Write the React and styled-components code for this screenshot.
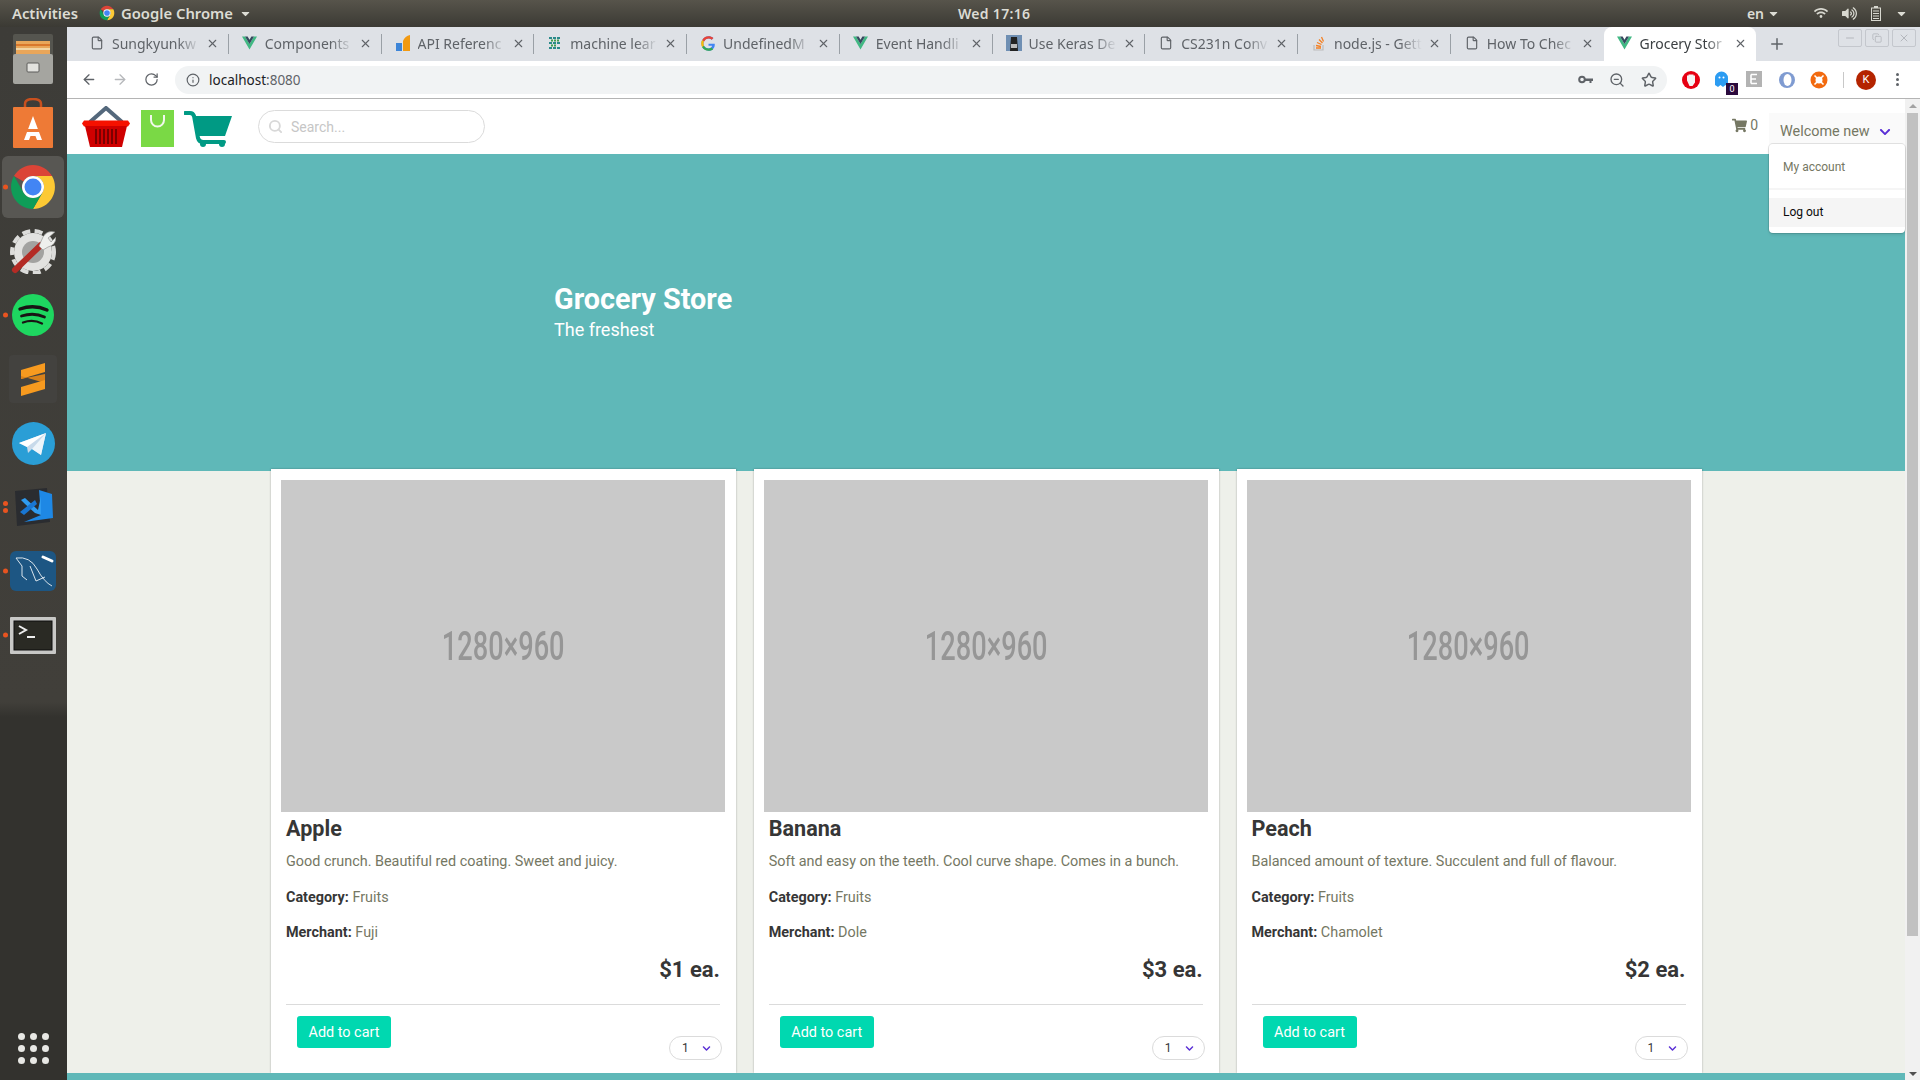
import styled, { createGlobalStyle } from "styled-components";
import { ArrowLeft, ArrowRight, RotateCw, Info, Search, Star, ZoomOut, X, Plus, Minus, File, Copy } from "lucide-react";
import { FaShoppingCart, FaChevronDown, FaCaretDown, FaWifi, FaVolumeUp } from "react-icons/fa";

const GlobalStyle = createGlobalStyle`
  html, body {
    margin: 0;
    padding: 0;
    overflow: hidden;
    background: #3c3b37;
  }
`;

const Screen = styled.div`
  width: 1920px;
  height: 1080px;
  display: flex;
  flex-direction: column;
  overflow: hidden;
  font-family: Roboto, "Liberation Sans", sans-serif;
`;

// Ubuntu top bar
const TopBar = styled.div`
  height: 27px;
  flex: none;
  box-sizing: border-box;
  padding-bottom: 1px;
  display: grid;
  grid-template-columns: 958px auto 1fr;
  align-items: center;
  background: linear-gradient(#57544b, #3b3a34);
  color: #dcdcd4;
  font-family: "Noto Sans", "Open Sans", sans-serif;
  font-size: 14.8px;
  font-weight: 600;
`;

const TopLeft = styled.div`
  display: flex;
  align-items: center;
  padding-left: 12px;
`;

const AppMenu = styled.div`
  display: flex;
  align-items: center;
  gap: 6px;
  margin-left: 21px;
`;

const TopClock = styled.div`
  font-size: 14px;
  letter-spacing: 0.3px;
`;

const TopRight = styled.div`
  display: flex;
  align-items: center;
  justify-content: flex-end;
  padding-right: 12px;
  gap: 14px;
`;

const Lang = styled.div`
  display: flex;
  align-items: center;
  gap: 3px;
  margin-right: 20px;
  font-size: 14px;
`;

const Body = styled.div`
  flex: 1;
  display: flex;
  min-height: 0;
`;

const Dock = styled.div`
  width: 67px;
  flex: none;
  display: flex;
  flex-direction: column;
  background: linear-gradient(#3d3c38 0, #413f3a 675px, #33322e 690px, #33322e 100%);
`;

const DockSlot = styled.div`
  position: relative;
  height: 64px;
  flex: none;
  box-sizing: border-box;
  padding-right: 1px;
  display: flex;
  align-items: center;
  justify-content: center;
`;

const ActiveTile = styled.div`
  width: 62px;
  height: 62px;
  border-radius: 6px;
  background: #585753;
  display: flex;
  align-items: center;
  justify-content: center;
`;

const DockDots = styled.div`
  position: absolute;
  left: 3px;
  top: 50%;
  transform: translateY(-50%);
  display: flex;
  flex-direction: column;
  gap: 2px;
`;

const DockDot = styled.div`
  width: 5px;
  height: 5px;
  border-radius: 50%;
  background: #e95420;
`;

const AppGrid = styled.div`
  margin-top: auto;
  margin-bottom: 16px;
  align-self: center;
  display: grid;
  grid-template-columns: repeat(3, 7px);
  gap: 5px;
`;

const GridDot = styled.div`
  width: 7px;
  height: 7px;
  border-radius: 50%;
  background: #e8e8e4;
`;

const Browser = styled.div`
  flex: 1;
  min-width: 0;
  display: flex;
  flex-direction: column;
`;

const TabStrip = styled.div`
  height: 34px;
  flex: none;
  display: flex;
  align-items: stretch;
  padding-left: 9px;
  background: #dee1e6;
`;

const Tab = styled.div`
  position: relative;
  width: 152.75px;
  flex: none;
  box-sizing: border-box;
  display: flex;
  align-items: center;
  padding: 0 0 2px 13px;
  background: ${({ $active }) => ($active ? "#fff" : "transparent")};
  border-radius: ${({ $active }) => ($active ? "8px 8px 0 0" : "0")};
  color: ${({ $active }) => ($active ? "#3c4043" : "#5f6368")};
  font-family: "Noto Sans", "Open Sans", sans-serif;
  font-size: 14px;
  &::after {
    content: "";
    position: absolute;
    right: 0;
    top: 7px;
    bottom: 7px;
    width: 1px;
    background: ${({ $divider }) => ($divider ? "#9aa0a6" : "transparent")};
  }
`;

const TabIcon = styled.div`
  width: 16px;
  height: 16px;
  flex: none;
  display: flex;
  align-items: center;
  justify-content: center;
`;

const TabTitle = styled.div`
  width: 88px;
  margin-left: 7px;
  overflow: hidden;
  white-space: nowrap;
  -webkit-mask-image: linear-gradient(90deg, #000 75%, transparent);
  mask-image: linear-gradient(90deg, #000 75%, transparent);
`;

const TabClose = styled.div`
  margin-left: 6px;
  display: flex;
  color: #5f6368;
`;

const NewTab = styled.div`
  display: flex;
  align-items: center;
  margin-left: 12px;
  color: #5f6368;
`;

const WindowButtons = styled.div`
  margin-left: auto;
  margin-right: 4px;
  margin-top: 2px;
  display: flex;
  align-items: flex-start;
  gap: 3px;
`;

const WindowButton = styled.div`
  width: 22px;
  height: 16px;
  border: 1px solid #c4c7cd;
  border-radius: 2px;
  display: flex;
  align-items: center;
  justify-content: center;
  color: #b4b7bd;
`;

const Toolbar = styled.div`
  height: 37px;
  flex: none;
  display: flex;
  align-items: center;
  padding-left: 14px;
  background: #fff;
  border-bottom: 1px solid #b4b4b4;
`;

const NavButton = styled.div`
  width: 16px;
  display: flex;
  justify-content: center;
  margin-right: 15px;
  color: ${({ $dim }) => ($dim ? "#b6b8bb" : "#5f6368")};
`;

const AddressBar = styled.div`
  width: 1492px;
  height: 28px;
  margin-left: 1px;
  display: flex;
  align-items: center;
  padding: 0 10px 0 11px;
  box-sizing: border-box;
  border-radius: 14px;
  background: #f1f3f4;
  color: #202124;
  font-family: "Noto Sans", "Open Sans", sans-serif;
  font-size: 13.5px;
`;

const Url = styled.div`
  margin-left: 2px;
  span {
    color: #5f6368;
  }
`;

const InfoSlot = styled.div`
  width: 14px;
  margin-right: 7px;
  display: flex;
`;

const AddressActions = styled.div`
  margin-left: auto;
  display: flex;
  align-items: center;
  gap: 16px;
  color: #5f6368;
`;

const Extensions = styled.div`
  display: flex;
  align-items: center;
  margin-left: 15px;
  gap: 14px;
`;

const Extension = styled.div`
  position: relative;
  width: 18px;
  height: 18px;
  display: flex;
`;

const GhostCount = styled.div`
  position: absolute;
  right: -6px;
  bottom: -6px;
  width: 12px;
  height: 12px;
  background: #2b0a3d;
  color: #fff;
  font-size: 9px;
  line-height: 12px;
  text-align: center;
`;

const ToolbarDivider = styled.div`
  width: 1px;
  height: 16px;
  margin-left: 15px;
  background: #c8c8c8;
`;

const Avatar = styled.div`
  width: 20px;
  height: 20px;
  margin-left: 12px;
  border-radius: 50%;
  background: #b42400;
  color: #fff;
  font-size: 11px;
  line-height: 20px;
  text-align: center;
`;

const KebabMenu = styled.div`
  display: flex;
  flex-direction: column;
  gap: 2px;
  margin-left: 20px;
`;

const KebabDot = styled.div`
  width: 3px;
  height: 3px;
  border-radius: 50%;
  background: #5f6368;
`;

const PageArea = styled.div`
  flex: 1;
  min-height: 0;
  display: flex;
`;

const Page = styled.div`
  position: relative;
  flex: 1;
  min-width: 0;
  display: flex;
  flex-direction: column;
  background: #eef0ea;
  color: #757763;
`;

// Site navbar
const Navbar = styled.div`
  height: 55px;
  flex: none;
  display: flex;
  align-items: center;
  padding-left: 14px;
  background: #fff;
`;

const LogoRow = styled.div`
  display: flex;
  align-items: flex-end;
  gap: 10px;
`;

const SearchBox = styled.div`
  width: 227px;
  height: 33px;
  margin-left: 26px;
  box-sizing: border-box;
  display: flex;
  align-items: center;
  gap: 8px;
  padding-left: 9px;
  border: 1px solid #dbdbdb;
  border-radius: 17px;
  color: #c6c6c6;
  font-size: 14px;
`;

const NavRight = styled.div`
  margin-left: auto;
  display: flex;
  align-items: flex-start;
  align-self: flex-start;
`;

const CartCount = styled.div`
  display: flex;
  align-items: center;
  gap: 3px;
  height: 52px;
  margin-right: 11px;
  color: #757763;
  font-size: 14px;
`;

const WelcomeButton = styled.div`
  width: 136px;
  height: 31px;
  margin-top: 14px;
  box-sizing: border-box;
  display: flex;
  align-items: center;
  gap: 9px;
  padding: 6px 0 0 11px;
  background: #fafafa;
  color: #757763;
  font-size: 14.4px;
`;

const AccountMenu = styled.div`
  position: absolute;
  right: 0;
  top: 45px;
  width: 136px;
  height: 89px;
  box-sizing: border-box;
  padding-top: 8px;
  background: #fff;
  border-radius: 4px;
  box-shadow: 0 2px 3px rgba(10, 10, 10, 0.1), 0 0 0 1px rgba(10, 10, 10, 0.1);
  font-size: 12px;
`;

const MenuItem = styled.div`
  height: ${({ $active }) => ($active ? "29px" : "30px")};
  line-height: ${({ $active }) => ($active ? "29px" : "30px")};
  padding-left: 14px;
  background: ${({ $active }) => ($active ? "#f5f5f5" : "transparent")};
  color: ${({ $active }) => ($active ? "#0a0a0a" : "#757763")};
`;

const MenuDivider = styled.div`
  height: 2px;
  margin: 6px 0 8px;
  background: #f5f5f5;
`;

const Hero = styled.div`
  height: 317px;
  flex: none;
  box-sizing: border-box;
  padding: 127px 0 0 487px;
  background: #5fb8b8;
  color: #fff;
`;

const HeroTitle = styled.div`
  font-size: 28.8px;
  font-weight: 700;
  line-height: 37px;
`;

const HeroSubtitle = styled.div`
  font-size: 18px;
  line-height: 24px;
`;

const CardRow = styled.div`
  flex: 1;
  min-height: 0;
  display: flex;
  gap: 17.75px;
  padding-left: 204px;
  margin-top: -2px;
`;

const Card = styled.div`
  width: 465px;
  height: 604px;
  flex: none;
  box-sizing: border-box;
  padding: 11px 11px 0 10px;
  background: #fff;
  box-shadow: 0 0 2px rgba(10, 10, 10, 0.3);
`;

const Placeholder = styled.div`
  height: 332px;
  display: flex;
  align-items: center;
  justify-content: center;
  background: #c9c9c9;
  color: #969696;
`;

const PlaceholderText = styled.div`
  font-size: 40px;
  font-weight: 500;
  transform: scaleX(0.68);
`;

const CardBody = styled.div`
  padding: 0 5px;
`;

const ProductName = styled.div`
  height: 33px;
  line-height: 33px;
  color: #363636;
  font-size: 21.6px;
  font-weight: 700;
`;

const Description = styled.div`
  margin-top: 6px;
  font-size: 14.4px;
  line-height: 22px;
`;

const Meta = styled.div`
  margin-top: ${({ $gap }) => $gap}px;
  font-size: 14.4px;
  line-height: 22px;
  b {
    color: #363636;
    font-weight: 700;
  }
`;

const Price = styled.div`
  margin-top: 12px;
  color: #363636;
  font-size: 22px;
  font-weight: 700;
  line-height: 28px;
  text-align: right;
`;

const Rule = styled.div`
  height: 1px;
  margin-top: 20px;
  background: #dbdbdb;
`;

const Actions = styled.div`
  display: flex;
  justify-content: space-between;
  align-items: flex-start;
  margin-top: 11px;
`;

const AddButton = styled.div`
  width: 94px;
  height: 32px;
  margin-left: 11px;
  border-radius: 3px;
  background: #00d8b0;
  color: #fff;
  font-size: 14.4px;
  line-height: 33px;
  text-align: center;
`;

const QtySelect = styled.div`
  width: 53px;
  height: 24px;
  margin-top: 20px;
  margin-right: -2px;
  box-sizing: border-box;
  display: flex;
  align-items: center;
  justify-content: space-between;
  padding: 0 10px 0 12px;
  border: 1px solid #dbdbdb;
  border-radius: 12px;
  color: #363636;
  font-size: 12px;
`;

const ChevronIcon = styled(FaChevronDown)`
  color: #5a2fd6;
  width: ${({ $size }) => $size}px;
  height: ${({ $size }) => $size}px;
`;

const PageFooter = styled.div`
  height: 7px;
  flex: none;
  background: #5fb8b8;
`;

const Scrollbar = styled.div`
  width: 15px;
  flex: none;
  display: flex;
  flex-direction: column;
  align-items: center;
  background: #f1f1f1;
`;

const ScrollArrow = styled.div`
  height: ${({ $down }) => ($down ? "auto" : "14px")};
  margin-top: ${({ $down }) => ($down ? "auto" : "0")};
  margin-bottom: ${({ $down }) => ($down ? "4px" : "0")};
  padding-top: ${({ $down }) => ($down ? "0" : "5px")};
  box-sizing: border-box;
  &::before {
    content: "";
    display: block;
    border-left: 4px solid transparent;
    border-right: 4px solid transparent;
    border-bottom: ${({ $down }) => ($down ? "0" : "4px solid #a3a3a3")};
    border-top: ${({ $down }) => ($down ? "4px solid #505050" : "0")};
  }
`;

const ScrollThumb = styled.div`
  width: 11px;
  height: 823px;
  flex: none;
  background: #c1c1c1;
`;

// Drawn icons
const ChromeLogo = ({ size }) => (
  <svg width={size} height={size} viewBox="0 0 48 48">
    <path d="M5 13A22 22 0 0 1 43 13H24A11 11 0 0 0 14.5 18.5Z" fill="#db4437" />
    <path d="M43 13A22 22 0 0 1 24 46L33.5 29.5A11 11 0 0 0 24 13Z" fill="#fcc934" />
    <path d="M24 46A22 22 0 0 1 5 13L14.5 29.5A11 11 0 0 0 33.5 29.5Z" fill="#0f9d58" />
    <circle cx="24" cy="24" r="11" fill="#fff" />
    <circle cx="24" cy="24" r="8.5" fill="#4285f4" />
  </svg>
);

const VueLogo = () => (
  <svg width="15" height="14" viewBox="0 0 16 14">
    <path d="M0 0H3.2L8 8 12.8 0H16L8 14Z" fill="#41b883" />
    <path d="M3.2 0H6L8 3.4 10 0H12.8L8 8Z" fill="#35495e" />
  </svg>
);

const FilesIcon = () => (
  <svg width="42" height="52" viewBox="0 0 42 52">
    <rect x="1" y="1" width="40" height="24" rx="2" fill="#55554f" />
    <rect x="4" y="8" width="34" height="13" fill="#e9a65a" />
    <rect x="4" y="11" width="34" height="2" fill="#d9772c" />
    <rect x="4" y="15" width="34" height="2" fill="#f2d5a5" />
    <rect x="1" y="21" width="40" height="30" rx="2" fill="#a5a5a0" />
    <rect x="15" y="30" width="12" height="9" rx="1" fill="#e2e2de" stroke="#5d5d5b" />
  </svg>
);

const StoreIcon = () => (
  <svg width="42" height="50" viewBox="0 0 42 50">
    <path d="M13 12V6Q13 1 21 1T29 6V12" fill="none" stroke="#c8501e" strokeWidth="2.5" />
    <rect x="1" y="9" width="40" height="41" rx="1" fill="#ee7a36" />
    <path d="M21 18L30 42H25L23.5 38H18.5L17 42H12Z" fill="#fff" />
    <rect x="12" y="31" width="18" height="3" fill="#ee7a36" />
  </svg>
);

const ToolIcon = () => (
  <svg width="46" height="46" viewBox="0 0 46 46">
    <circle cx="23" cy="24" r="21" fill="none" stroke="#dcdcda" strokeWidth="4" strokeDasharray="8 4.500" />
    <circle cx="23" cy="24" r="19" fill="#e2e2e0" />
    <circle cx="23" cy="24" r="11" fill="#a2a2a0" />
    <path d="M5 42L31 17" stroke="#b42b25" strokeWidth="6" strokeLinecap="round" />
    <path d="M29 18L33 9Q37 2 45 4L38 10 41 14 46 9Q46 17 38 19L33 22Z" fill="#efefed" stroke="#8c8c8a" strokeWidth="0.6" />
  </svg>
);

const SpotifyIcon = () => (
  <svg width="42" height="42" viewBox="0 0 42 42">
    <circle cx="21" cy="21" r="21" fill="#1ed760" />
    <g fill="none" stroke="#191414" strokeLinecap="round">
      <path d="M8 15Q22 10 35 16" strokeWidth="3.4" />
      <path d="M9.5 22Q22 18 32.5 23" strokeWidth="2.8" />
      <path d="M11 28.5Q21 25 30 29.5" strokeWidth="2.3" />
    </g>
  </svg>
);

const SublimeIcon = () => (
  <svg width="48" height="48" viewBox="0 0 48 48">
    <rect width="48" height="48" rx="4" fill="#43423f" />
    <path d="M12 15L36 8V17L12 24Z" fill="#f79a1f" />
    <path d="M12 21L36 28V19L12 24Z" fill="#d8811a" />
    <path d="M12 32L36 25V34L12 41Z" fill="#f79a1f" />
  </svg>
);

const TelegramIcon = () => (
  <svg width="43" height="43" viewBox="0 0 43 43">
    <circle cx="21.5" cy="21.5" r="21.5" fill="#2a9ed6" />
    <path d="M7 21L34 11 29 33 20 27 16 31 15 25Z" fill="#c8daea" />
    <path d="M7 21L34 11 15 25Z" fill="#fff" />
    <path d="M20 27L34 11 29 33Z" fill="#eef5fa" />
  </svg>
);

const VSCodeIcon = () => (
  <svg width="42" height="38" viewBox="0 0 42 38">
    <path d="M3 3L35 0 38 34 5 38Z" fill="#2a2c30" />
    <path d="M27 2L40 6 41 30 12 34 29 27Z" fill="#1e88e5" />
    <path d="M9 12L13 10 26 22 29 8V27L23 25 13 16Z" fill="#2f9bf0" />
    <path d="M8 24L23 12 25 16 12 27Z" fill="#1976d2" />
  </svg>
);

const MysqlIcon = () => (
  <svg width="46" height="40" viewBox="0 0 46 40">
    <rect width="46" height="40" rx="6" fill="#1d5683" />
    <path d="M6 7Q20 5 27 18T42 35M6 7L12 15 12 25 17 29M20 15L26 30 35 26" fill="none" stroke="#d9e4ec" strokeWidth="1" />
    <path d="M33 6L42 10" stroke="#fff" strokeWidth="3" strokeLinecap="round" />
  </svg>
);

const TerminalIcon = () => (
  <svg width="46" height="37" viewBox="0 0 46 37">
    <rect width="46" height="37" rx="1" fill="#c8c8c6" />
    <rect x="4" y="4" width="38" height="29" fill="#2a2a24" stroke="#0c0c0c" />
    <path d="M9 9L16 13 9 17" fill="none" stroke="#eee" strokeWidth="2" />
    <rect x="17" y="19" width="8" height="2" fill="#eee" />
  </svg>
);

const BatteryIcon = () => (
  <svg width="10" height="15" viewBox="0 0 10 15">
    <rect x="3" y="0" width="4" height="2" fill="#d8d8d0" />
    <rect x="0.5" y="2" width="9" height="12.5" fill="none" stroke="#d8d8d0" />
    <path d="M2 5H8M2 7.5H8M2 10H8M2 12.5H8" stroke="#d8d8d0" />
  </svg>
);

const KeyIcon = () => (
  <svg width="15" height="15" viewBox="0 0 15 10">
    <circle cx="4" cy="5" r="2.800" fill="none" stroke="#5f6368" strokeWidth="2" />
    <path d="M6 4H15V6.500H13.500V8.500H11.500V6.500H6Z" fill="#5f6368" />
  </svg>
);

const ApiFavicon = () => (
  <svg width="14" height="16" viewBox="0 0 14 16">
    <path d="M0 8H6V16H0Z" fill="#3d85d8" />
    <path d="M7 16V6Q9 1 14 0V16Z" fill="#f29a12" />
  </svg>
);

const TilesFavicon = () => (
  <svg width="14" height="14" viewBox="0 0 14 14">
    <path d="M1 2H13M1 7H13M1 12H13" stroke="#2b8a8a" strokeWidth="2" strokeDasharray="3 1" />
    <path d="M3 4.5H11M3 9.5H9" stroke="#3f9d4f" strokeWidth="2" strokeDasharray="2 1" />
  </svg>
);

const GoogleFavicon = () => (
  <svg width="15" height="15" viewBox="0 0 48 48">
    <path d="M44 24.5H24v7h11.5C34 37 29.500 40 24 40a16 16 0 0 1 0-32c4 0 7.500 1.500 10.300 4l5.300-5.300C35.500 3 30 1 24 1a23 23 0 0 0 0 46c13 0 21-9 20-22.500Z" fill="#4285f4" />
    <path d="M4 13l6 4.500A16 16 0 0 1 24 8c4 0 7.500 1.500 10.300 4l5.300-5.300C35.500 3 30 1 24 1 15 1 7.500 6 4 13Z" fill="#ea4335" />
    <path d="M3 35l6-4.500A16 16 0 0 0 24 40c3.500 0 6.500-1 9-3l6 5c-4 3.500-9 5-15 5C15 47 7 42 3 35Z" fill="#34a853" />
    <path d="M3.500 13A23 23 0 0 0 3.500 35l6-4.500a16 16 0 0 1 0-13Z" fill="#fbbc05" />
  </svg>
);

const KerasFavicon = () => (
  <svg width="16" height="16" viewBox="0 0 16 16">
    <rect width="16" height="16" fill="#6f8fb3" />
    <path d="M5 2H11L12 16H4Z" fill="#222" />
    <rect x="5" y="9" width="6" height="4" fill="#bbb" />
  </svg>
);

const StackFavicon = () => (
  <svg width="14" height="16" viewBox="0 0 14 16">
    <path d="M2 10V15H11V10" fill="none" stroke="#bcbbbb" strokeWidth="1.200" />
    <path d="M4 13H9M4 10.500L9 11.500M5 7.500L9.500 9.500M7 4.500L10.500 8M9.500 2L11.500 6.500" stroke="#f48024" strokeWidth="1.300" />
  </svg>
);

const OperaBlock = () => (
  <svg width="18" height="18" viewBox="0 0 18 18">
    <circle cx="9" cy="9" r="9" fill="#e60012" />
    <path d="M5 9.500V4.500H6.500V3.500H11.500V4.500H13V11.500L10.500 15H7.500Z" fill="#f4f4f4" />
  </svg>
);

const GhostExt = () => (
  <svg width="15" height="18" viewBox="0 0 15 18">
    <path d="M1 7A6.500 6.500 0 0 1 14 7V16L11.500 14 9 16 6.500 14 4 16 1 14Z" fill="#2c9cf2" />
    <circle cx="5.500" cy="6.500" r="1" fill="#fff" />
    <circle cx="9.500" cy="6.500" r="1" fill="#fff" />
  </svg>
);

const EvernoteExt = () => (
  <svg width="16" height="16" viewBox="0 0 16 16">
    <rect width="16" height="16" fill="#b3b3b3" />
    <path d="M5 3.500H11M5 8H10M5 12.500H11M5 3.500V12.500" stroke="#fff" strokeWidth="1.600" fill="none" />
  </svg>
);

const RingExt = () => (
  <svg width="18" height="18" viewBox="0 0 18 18">
    <circle cx="9" cy="9" r="8" fill="#7f9bd1" />
    <ellipse cx="9.500" cy="9" rx="4" ry="6" fill="#fff" />
  </svg>
);

const BuoyExt = () => (
  <svg width="18" height="18" viewBox="0 0 18 18">
    <circle cx="9" cy="9" r="6" fill="none" stroke="#f26a0f" strokeWidth="5" />
    <path d="M4.500 4.500L7 7M13.500 4.500L11 7M4.500 13.500L7 11M13.500 13.500L11 11" stroke="#fff" strokeWidth="1.600" />
  </svg>
);

const BasketLogo = () => (
  <svg width="50" height="41" viewBox="0 0 50 41">
    <path d="M9 16L25 2 41 16" fill="none" stroke="#54687c" strokeWidth="4" />
    <path d="M3 14.500H47L49 17.500 47 20.500H3L1 17.500Z" fill="#f61100" />
    <path d="M4 20H46L41 41H9Z" fill="#cf0000" />
    <path d="M15 23V38M19 23V38M23 23V38M27 23V38M31 23V38M35 23V38" stroke="#7a0000" strokeWidth="2" />
  </svg>
);

const BagLogo = () => (
  <svg width="33" height="37" viewBox="0 0 33 37">
    <rect width="33" height="37" fill="#7ad945" />
    <path d="M10 5V10A6.500 6.500 0 0 0 23 10V5" fill="none" stroke="#f2f8ec" strokeWidth="2" />
  </svg>
);

const CartLogo = () => (
  <svg width="48" height="36" viewBox="0 0 48 36">
    <path d="M1 2H6Q9 2 10 5L14 27Q15 31 19 31H40" fill="none" stroke="#009a84" strokeWidth="4" strokeLinecap="round" />
    <path d="M10 5H48L41 25H14Z" fill="#009a84" />
    <circle cx="19" cy="33" r="3" fill="#009a84" />
    <circle cx="38" cy="33" r="3" fill="#009a84" />
  </svg>
);

const tabs = [
  { title: "Sungkyunkw", icon: <File size={14} color="#5f6368" /> },
  { title: "Components", icon: <VueLogo /> },
  { title: "API Referenc", icon: <ApiFavicon /> },
  { title: "machine lear", icon: <TilesFavicon /> },
  { title: "UndefinedM", icon: <GoogleFavicon /> },
  { title: "Event Handli", icon: <VueLogo /> },
  { title: "Use Keras De", icon: <KerasFavicon /> },
  { title: "CS231n Conv", icon: <File size={14} color="#5f6368" /> },
  { title: "node.js - Gett", icon: <StackFavicon /> },
  { title: "How To Chec", icon: <File size={14} color="#5f6368" /> },
];

const dockApps = [
  { icon: <FilesIcon />, dots: 0 },
  { icon: <StoreIcon />, dots: 0 },
  { icon: <ChromeLogo size={48} />, dots: 1, active: true },
  { icon: <ToolIcon />, dots: 0 },
  { icon: <SpotifyIcon />, dots: 1 },
  { icon: <SublimeIcon />, dots: 0 },
  { icon: <TelegramIcon />, dots: 0 },
  { icon: <VSCodeIcon />, dots: 2 },
  { icon: <MysqlIcon />, dots: 1 },
  { icon: <TerminalIcon />, dots: 1 },
];

const products = [
  {
    name: "Apple",
    description: "Good crunch. Beautiful red coating. Sweet and juicy.",
    merchant: "Fuji",
    price: 1,
  },
  {
    name: "Banana",
    description: "Soft and easy on the teeth. Cool curve shape. Comes in a bunch.",
    merchant: "Dole",
    price: 3,
  },
  {
    name: "Peach",
    description: "Balanced amount of texture. Succulent and full of flavour.",
    merchant: "Chamolet",
    price: 2,
  },
];

const App = () => {
  return (
    <Screen>
      <GlobalStyle />
      <TopBar>
        <TopLeft>
          Activities
          <AppMenu>
            <ChromeLogo size={16} />
            Google Chrome
            <FaCaretDown size={13} />
          </AppMenu>
        </TopLeft>
        <TopClock>Wed 17:16</TopClock>
        <TopRight>
          <Lang>
            en
            <FaCaretDown size={13} />
          </Lang>
          <FaWifi size={14} color="#d8d8d0" />
          <FaVolumeUp size={15} color="#d8d8d0" />
          <BatteryIcon />
          <FaCaretDown size={13} />
        </TopRight>
      </TopBar>

      <Body>
        <Dock>
          {dockApps.map((app, i) => (
            <DockSlot key={i}>
              {app.dots > 0 && (
                <DockDots>
                  {Array.from({ length: app.dots }).map((_, d) => (
                    <DockDot key={d} />
                  ))}
                </DockDots>
              )}
              {app.active ? <ActiveTile>{app.icon}</ActiveTile> : app.icon}
            </DockSlot>
          ))}
          <AppGrid>
            {Array.from({ length: 9 }).map((_, i) => (
              <GridDot key={i} />
            ))}
          </AppGrid>
        </Dock>

        <Browser>
          <TabStrip>
            {tabs.map((tab, i) => (
              <Tab key={i} $divider={i < tabs.length - 1}>
                <TabIcon>{tab.icon}</TabIcon>
                <TabTitle>{tab.title}</TabTitle>
                <TabClose>
                  <X size={13} strokeWidth={2} />
                </TabClose>
              </Tab>
            ))}
            <Tab $active>
              <TabIcon>
                <VueLogo />
              </TabIcon>
              <TabTitle>Grocery Stor</TabTitle>
              <TabClose>
                <X size={13} strokeWidth={2} />
              </TabClose>
            </Tab>
            <NewTab>
              <Plus size={18} />
            </NewTab>
            <WindowButtons>
              <WindowButton>
                <Minus size={12} />
              </WindowButton>
              <WindowButton>
                <Copy size={10} />
              </WindowButton>
              <WindowButton>
                <X size={12} />
              </WindowButton>
            </WindowButtons>
          </TabStrip>

          <Toolbar>
            <NavButton>
              <ArrowLeft size={17} />
            </NavButton>
            <NavButton $dim>
              <ArrowRight size={17} />
            </NavButton>
            <NavButton>
              <RotateCw size={15} />
            </NavButton>
            <AddressBar>
              <InfoSlot>
                <Info size={14} color="#5f6368" />
              </InfoSlot>
              <Url>
                localhost<span>:8080</span>
              </Url>
              <AddressActions>
                <KeyIcon />
                <ZoomOut size={16} />
                <Star size={16} strokeWidth={2.2} />
              </AddressActions>
            </AddressBar>
            <Extensions>
              <Extension>
                <OperaBlock />
              </Extension>
              <Extension>
                <GhostExt />
                <GhostCount>0</GhostCount>
              </Extension>
              <Extension>
                <EvernoteExt />
              </Extension>
              <Extension>
                <RingExt />
              </Extension>
              <Extension>
                <BuoyExt />
              </Extension>
            </Extensions>
            <ToolbarDivider />
            <Avatar>K</Avatar>
            <KebabMenu>
              <KebabDot />
              <KebabDot />
              <KebabDot />
            </KebabMenu>
          </Toolbar>

          <PageArea>
            <Page>
              <Navbar>
                <LogoRow>
                  <BasketLogo />
                  <BagLogo />
                  <CartLogo />
                </LogoRow>
                <SearchBox>
                  <Search size={15} strokeWidth={3} color="#d8d8d8" />
                  Search...
                </SearchBox>
                <NavRight>
                  <CartCount>
                    <FaShoppingCart size={15} />0
                  </CartCount>
                  <WelcomeButton>
                    Welcome new
                    <ChevronIcon $size={12} />
                  </WelcomeButton>
                </NavRight>
              </Navbar>
              <AccountMenu>
                <MenuItem>My account</MenuItem>
                <MenuDivider />
                <MenuItem $active>Log out</MenuItem>
              </AccountMenu>

              <Hero>
                <HeroTitle>Grocery Store</HeroTitle>
                <HeroSubtitle>The freshest</HeroSubtitle>
              </Hero>

              <CardRow>
                {products.map((product) => (
                  <Card key={product.name}>
                    <Placeholder>
                      <PlaceholderText>1280×960</PlaceholderText>
                    </Placeholder>
                    <CardBody>
                      <ProductName>{product.name}</ProductName>
                      <Description>{product.description}</Description>
                      <Meta $gap={14}>
                        <b>Category:</b> Fruits
                      </Meta>
                      <Meta $gap={13}>
                        <b>Merchant:</b> {product.merchant}
                      </Meta>
                      <Price>${product.price} ea.</Price>
                      <Rule />
                      <Actions>
                        <AddButton>Add to cart</AddButton>
                        <QtySelect>
                          1
                          <ChevronIcon $size={9} />
                        </QtySelect>
                      </Actions>
                    </CardBody>
                  </Card>
                ))}
              </CardRow>
              <PageFooter />
            </Page>
            <Scrollbar>
              <ScrollArrow />
              <ScrollThumb />
              <ScrollArrow $down />
            </Scrollbar>
          </PageArea>
        </Browser>
      </Body>
    </Screen>
  );
};

export default App;
